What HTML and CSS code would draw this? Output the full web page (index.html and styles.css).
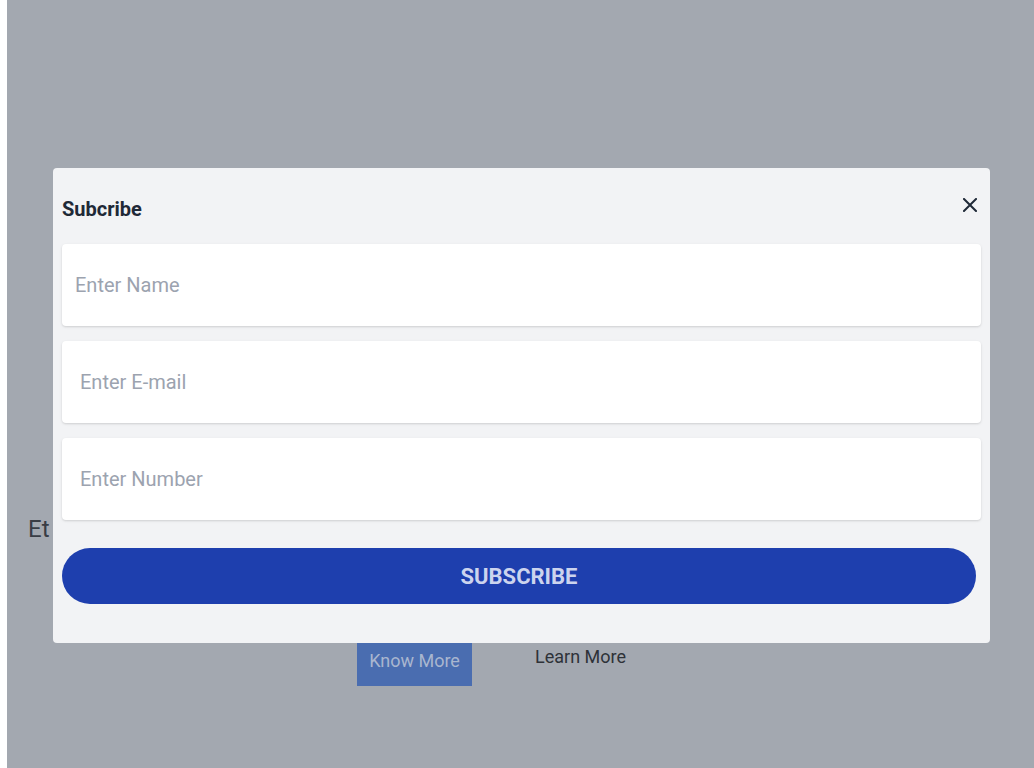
FILE: index.html
```html
<!DOCTYPE html>
<html lang="en">
<head>
<meta charset="utf-8">
<title>Subcribe</title>
<link rel="stylesheet" href="styles.css">
</head>
<body>
<div class="page">
  <section class="hero">
    <p class="hero-title">Et</p>
    <div class="hero-actions">
      <a class="btn-know" href="#">Know More</a>
      <a class="btn-learn" href="#">Learn More</a>
    </div>
  </section>

  <div class="modal" role="dialog" aria-labelledby="modal-title">
    <div class="modal-head">
      <h2 id="modal-title" class="modal-title">Subcribe</h2>
      <button class="modal-close" type="button" aria-label="Close">
        <svg width="14" height="14" viewBox="0 0 14 14" aria-hidden="true">
          <path d="M1 1 L13 13 M13 1 L1 13" stroke="#1f2937" stroke-width="2" stroke-linecap="square" fill="none"/>
        </svg>
      </button>
    </div>
    <form class="modal-form">
      <input class="field field-name" type="text" placeholder="Enter Name">
      <input class="field" type="email" placeholder="Enter E-mail">
      <input class="field" type="tel" placeholder="Enter Number">
      <button class="btn-subscribe" type="button">SUBSCRIBE</button>
    </form>
  </div>
</div>
</body>
</html>
```

FILE: styles.css
```css
html, body {
  margin: 0;
  padding: 0;
  background: #ffffff;
}

body {
  font-family: Roboto, "Liberation Sans", Arial, sans-serif;
  overflow: hidden;
}

.page {
  position: relative;
  margin-left: 7px;
  height: 768px;
  background: #a3a8b0;
}

.hero {
  display: flex;
  flex-direction: column;
  padding-top: 515px;
  padding-left: 21px;
}

.hero-title {
  margin: 0;
  font-size: 24px;
  line-height: 28px;
  color: #393d45;
}

.hero-actions {
  display: flex;
  align-items: flex-start;
  gap: 63px;
  margin-top: 91px;
  margin-left: 329px;
}

.btn-know {
  display: block;
  width: 115px;
  height: 52px;
  box-sizing: border-box;
  padding-top: 16px;
  text-align: center;
  background: #4a6db0;
  color: #a9b6cf;
  font-size: 18px;
  line-height: 22px;
  text-decoration: none;
}

.btn-learn {
  display: block;
  padding-top: 12px;
  color: #2e3238;
  font-size: 18px;
  line-height: 22px;
  text-decoration: none;
}

.modal {
  position: absolute;
  left: 46px;
  top: 168px;
  width: 937px;
  height: 475px;
  box-sizing: border-box;
  padding: 27px 9px 0 9px;
  background: #f2f3f5;
  border-radius: 4px;
}

.modal-head {
  display: flex;
  align-items: flex-start;
  justify-content: space-between;
}

.modal-title {
  margin: 0;
  font-size: 20px;
  line-height: 28px;
  font-weight: 700;
  color: #1f2937;
}

.modal-close {
  margin: 3px 4px 0 0;
  padding: 0;
  width: 14px;
  height: 14px;
  border: 0;
  background: transparent;
  display: flex;
  cursor: pointer;
}

.modal-form {
  display: flex;
  flex-direction: column;
  gap: 15px;
  margin-top: 21px;
}

.field {
  display: block;
  height: 82px;
  box-sizing: border-box;
  padding: 0 18px;
  border: 0;
  border-radius: 4px;
  background: #ffffff;
  box-shadow: 0 1px 3px rgba(0, 0, 0, 0.1), 0 1px 2px rgba(0, 0, 0, 0.06);
  font-family: Roboto, "Liberation Sans", Arial, sans-serif;
  font-size: 20px;
  color: #1f2937;
  outline: none;
}

.field-name {
  padding-left: 13px;
}

.field::placeholder {
  color: #9ca3af;
  opacity: 1;
}

.btn-subscribe {
  margin-top: 13px;
  width: 914px;
  height: 56px;
  border: 0;
  border-radius: 28px;
  background: #1e3fae;
  color: #ccd4ee;
  font-family: Roboto, "Liberation Sans", Arial, sans-serif;
  font-size: 22px;
  font-weight: 700;
  cursor: pointer;
}
```
